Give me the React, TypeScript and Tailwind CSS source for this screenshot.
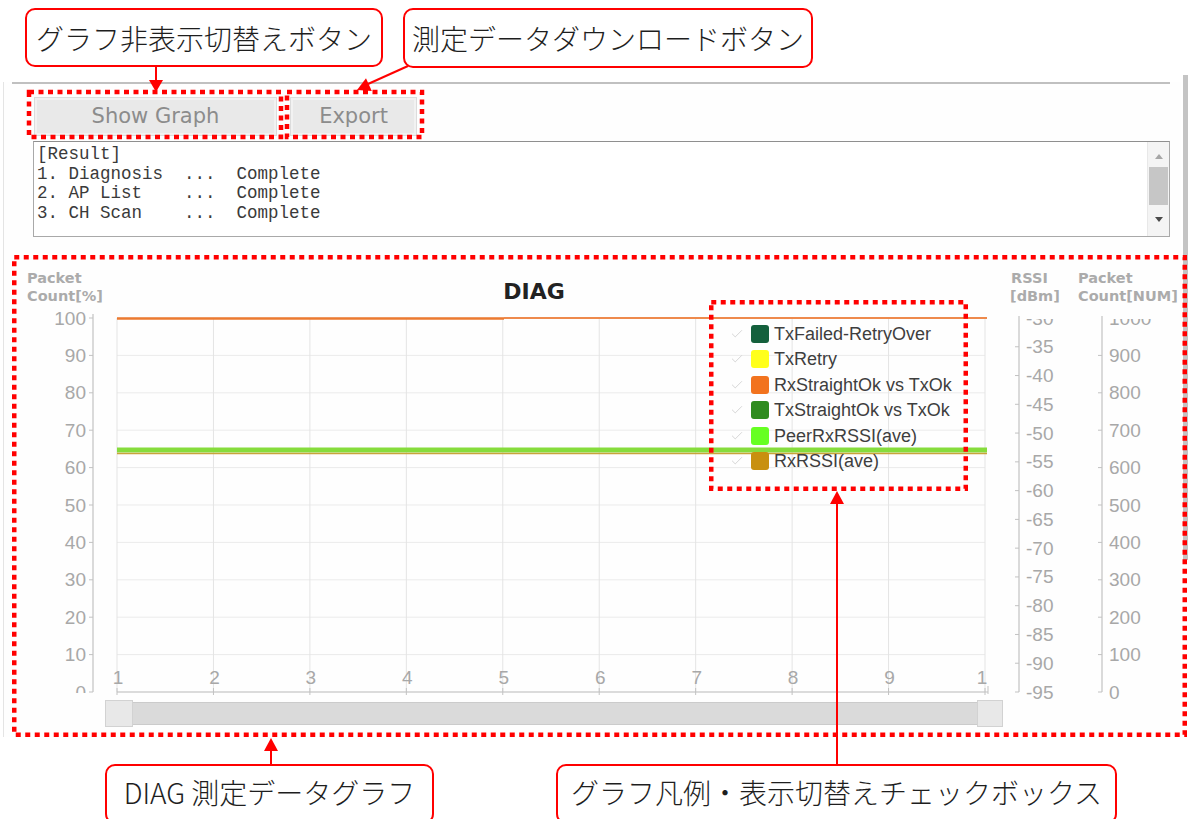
import React from 'react';
import { Check } from 'lucide-react';

const PLOT_L = 117;
const PLOT_R = 985;
const PLOT_T = 318;
const PLOT_B = 692;

const gridX = Array.from({ length: 10 }, (_, i) => PLOT_L + ((PLOT_R - PLOT_L) * i) / 9);
const pctY = (v: number) => PLOT_B - ((PLOT_B - PLOT_T) * v) / 100;
const pctTicks = [100, 90, 80, 70, 60, 50, 40, 30, 20, 10, 0];
const rssiTicks = Array.from({ length: 14 }, (_, i) => -30 - i * 5);
const rssiY = (i: number) => PLOT_T + ((PLOT_B - PLOT_T) * i) / 13;
const xLabels = ['1', '2', '3', '4', '5', '6', '7', '8', '9', '1'];

const legend = [
  { name: 'TxFailed-RetryOver', color: '#14603c' },
  { name: 'TxRetry', color: '#ffff1a' },
  { name: 'RxStraightOk vs TxOk', color: '#f2731e' },
  { name: 'TxStraightOk vs TxOk', color: '#2e8b1e' },
  { name: 'PeerRxRSSI(ave)', color: '#66ff22' },
  { name: 'RxRSSI(ave)', color: '#c8900f' },
];

const resultText = `[Result]
1. Diagnosis  ...  Complete
2. AP List    ...  Complete
3. CH Scan    ...  Complete`;

const Callout: React.FC<{ className: string; children: React.ReactNode }> = ({ className, children }) => (
  <div
    className={`absolute flex items-center justify-center bg-white border-[2.5px] border-[#ff0000] rounded-[10px] text-[28px] font-light text-[#1e1e1e] font-['Noto_Sans_CJK_JP',sans-serif] whitespace-nowrap ${className}`}
  >
    {children}
  </div>
);

const DiagChart: React.FC = () => {
  const tickText = { fontFamily: '"Liberation Sans", Arial, sans-serif', fontSize: 19, fill: '#a8a8a8' };
  const axisTitle = { fontFamily: '"DejaVu Sans", Verdana, sans-serif', fontSize: 14.5, fontWeight: 700, fill: '#ababab' };

  return (
    <svg width={1169} height={446} viewBox="12 258 1169 446" className="block -mb-[4px]">
      <defs>
        <clipPath id="clipLeft">
          <rect x={12} y={258} width={100} height={435} />
        </clipPath>
        <clipPath id="clipRight">
          <rect x={1000} y={319} width={181} height={400} />
        </clipPath>
      </defs>

      {/* axis titles */}
      <text x={27} y={283} style={axisTitle}>Packet</text>
      <text x={27} y={301} style={axisTitle}>Count[%]</text>
      <text x={1011} y={283} style={axisTitle}>RSSI</text>
      <text x={1010} y={301} style={axisTitle}>[dBm]</text>
      <text x={1078} y={283} style={axisTitle}>Packet</text>
      <text x={1078} y={301} style={axisTitle}>Count[NUM]</text>
      <text
        x={534}
        y={299}
        textAnchor="middle"
        style={{ fontFamily: '"DejaVu Sans", Verdana, sans-serif', fontSize: 22, fontWeight: 700, fill: '#222' }}
      >
        DIAG
      </text>

      {/* grid */}
      {pctTicks.map((v) => (
        <line key={`h${v}`} x1={PLOT_L} x2={PLOT_R} y1={pctY(v)} y2={pctY(v)} stroke="#ebebeb" strokeWidth={1} />
      ))}
      {gridX.map((x, i) => (
        <line key={`v${i}`} x1={x} x2={x} y1={PLOT_T} y2={PLOT_B} stroke="#e4e4e4" strokeWidth={1} />
      ))}

      {/* left axis */}
      <line x1={93} x2={93} y1={314} y2={PLOT_B} stroke="#c2c2c2" strokeWidth={1.2} />
      <g clipPath="url(#clipLeft)">
        {pctTicks.map((v) => (
          <g key={`l${v}`}>
            <line x1={89} x2={93} y1={pctY(v)} y2={pctY(v)} stroke="#c2c2c2" />
            <text x={86} y={pctY(v)} textAnchor="end" dominantBaseline="central" style={tickText}>
              {v}
            </text>
          </g>
        ))}
      </g>

      {/* bottom axis */}
      <line x1={PLOT_L} x2={988} y1={PLOT_B} y2={PLOT_B} stroke="#c2c2c2" strokeWidth={1.2} />
      {gridX.map((x, i) => (
        <g key={`b${i}`}>
          <line x1={x} x2={x} y1={688} y2={695} stroke="#c2c2c2" />
          <text x={i === 9 ? x - 3 : x + 1} y={677} textAnchor="middle" dominantBaseline="central" style={tickText}>
            {xLabels[i]}
          </text>
        </g>
      ))}
      <line x1={988} x2={988} y1={686} y2={694} stroke="#c2c2c2" />

      {/* right axes */}
      <line x1={1019} x2={1019} y1={316} y2={PLOT_B} stroke="#c2c2c2" strokeWidth={1.2} />
      <line x1={1102} x2={1102} y1={316} y2={PLOT_B} stroke="#c2c2c2" strokeWidth={1.2} />
      <g clipPath="url(#clipRight)">
        {rssiTicks.map((v, i) => (
          <g key={`r${v}`}>
            <line x1={1015} x2={1019} y1={rssiY(i)} y2={rssiY(i)} stroke="#c2c2c2" />
            <text x={1026} y={rssiY(i)} dominantBaseline="central" style={tickText}>
              {v}
            </text>
          </g>
        ))}
        {pctTicks.map((v) => (
          <g key={`n${v}`}>
            <line x1={1098} x2={1102} y1={pctY(v)} y2={pctY(v)} stroke="#c2c2c2" />
            <text x={1109} y={pctY(v)} dominantBaseline="central" style={tickText}>
              {v * 10}
            </text>
          </g>
        ))}
      </g>

      {/* series */}
      <line x1={PLOT_L} x2={504} y1={318.5} y2={318.5} stroke="#ec7a30" strokeWidth={2.5} />
      <line x1={504} x2={PLOT_R + 2} y1={318} y2={318} stroke="#ee8a4c" strokeWidth={2} />
      <rect x={PLOT_L} y={447.5} width={PLOT_R - PLOT_L + 2} height={5} fill="#86dc3c" />
      <line x1={PLOT_L} x2={PLOT_R + 2} y1={453.5} y2={453.5} stroke="#c9a23a" strokeWidth={1.5} />
    </svg>
  );
};

const App: React.FC = () => {
  return (
    <div className="relative w-[1189px] h-[819px] overflow-hidden bg-white">
      {/* captured application panel */}
      <div className="flex items-start pt-[75px]">
        <div className="ml-[3px] mt-[7px] w-[1178px] h-[655px] border-l border-[#e4e4e4] bg-[#fefefe]">
          <div className="ml-[8px] w-[1158px] h-[2px] bg-[#c0c0c0]" />

          <div className="flex gap-[13px] ml-[30px] mt-[13px] font-['DejaVu_Sans',sans-serif] text-[21px] text-[#8c8c8c]">
            <button className="w-[243px] h-[39px] bg-[#e9e9e9] border border-[#dcdcdc] shadow-[inset_0_0_0_2px_#f2f2f2]">
              Show Graph
            </button>
            <button className="w-[127px] h-[39px] bg-[#e9e9e9] border border-[#dcdcdc] shadow-[inset_0_0_0_2px_#f2f2f2]">
              Export
            </button>
          </div>

          <div className="flex ml-[29px] mt-[5px] w-[1137px] h-[96px] border border-[#a9a9a9] border-t-[#8f8f8f] bg-white">
            <pre className="flex-1 pl-[3px] pt-[3px] font-['Liberation_Mono',monospace] text-[17.5px] leading-[19.7px] text-[#3a3a3a]">
              {resultText}
            </pre>
            <div className="w-[22px] flex flex-col items-center bg-[#f4f4f4] border-l border-[#e8e8e8]">
              <svg width="10" height="8" viewBox="0 0 10 8" className="mt-[10px]">
                <polygon points="1,7 9,7 5,2" fill="#a6a6a6" />
              </svg>
              <div className="mt-[7px] w-[19px] h-[38px] bg-[#c6c6c6]" />
              <svg width="10" height="8" viewBox="0 0 10 8" className="mt-[11px]">
                <polygon points="1,1 9,1 5,6" fill="#4a4a4a" />
              </svg>
            </div>
          </div>

          <div className="relative ml-[8px] mt-[21px] w-[1169px]">
            <DiagChart />

            {/* legend with visibility checkboxes */}
            <div className="absolute left-[718px] top-[63px] flex flex-col font-['Liberation_Sans',Arial,sans-serif] text-[18px] text-[#3e3e3e]">
              {legend.map((item) => (
                <div key={item.name} className="flex items-center h-[25.5px]">
                  <Check size={14} strokeWidth={1.5} className="text-[#cfcfcf]" />
                  <div className="ml-[7px] w-[18px] h-[18px] rounded-[3px]" style={{ backgroundColor: item.color }} />
                  <span className="ml-[5px] leading-none">{item.name}</span>
                </div>
              ))}
            </div>

            {/* range slider */}
            <div className="relative flex items-center ml-[93px] w-[898px] h-[27px]">
              <div className="w-[28px] h-[27px] bg-[#e8e8e8] border border-[#d2d2d2]" />
              <div className="flex-1 h-[23px] bg-[#dadada] border-y border-[#cbcbcb]" />
              <div className="w-[26px] h-[27px] bg-[#e8e8e8] border border-[#d2d2d2]" />
            </div>
          </div>
        </div>
        <div className="ml-[2px] w-[5px] h-[485px] bg-[#c4c4c4]" />
      </div>

      {/* annotation layer */}
      <svg className="absolute inset-0 pointer-events-none" width={1189} height={819} viewBox="0 0 1189 819">
        <g fill="none" stroke="#ff0000" strokeWidth={4.5} strokeDasharray="5 4.5">
          <rect x={29} y={92} width={252} height={45} />
          <rect x={287} y={92} width={135} height={45} />
          <rect x={14.25} y={257.25} width={1170.5} height={477.5} />
          <rect x={711.25} y={302.25} width={254.5} height={186.5} />
        </g>
        <g stroke="#ff0000" strokeWidth={2} fill="#ff0000">
          <line x1={156} y1={67} x2={156} y2={81} />
          <polygon points="149,80 163,80 156,92" stroke="none" />
          <line x1={408} y1={66} x2={368} y2={84} />
          <polygon points="357,90 371.8,91.1 366,78.3" stroke="none" />
          <line x1={271} y1={766} x2={271} y2={750} />
          <polygon points="264,751 278,751 271,738" stroke="none" />
          <line x1={837} y1={766} x2={837} y2={503} />
          <polygon points="830,504 844,504 837,491" stroke="none" />
        </g>
      </svg>

      <Callout className="left-[25px] top-[8px] w-[358px] h-[59px]">グラフ非表示切替えボタン</Callout>
      <Callout className="left-[403px] top-[8px] w-[410px] h-[60px]">測定データダウンロードボタン</Callout>
      <Callout className="left-[105px] top-[764px] w-[329px] h-[60px] pb-[4px]">DIAG 測定データグラフ</Callout>
      <Callout className="left-[556px] top-[764px] w-[561px] h-[60px] pb-[4px]">グラフ凡例・表示切替えチェックボックス</Callout>
    </div>
  );
};

export default App;
